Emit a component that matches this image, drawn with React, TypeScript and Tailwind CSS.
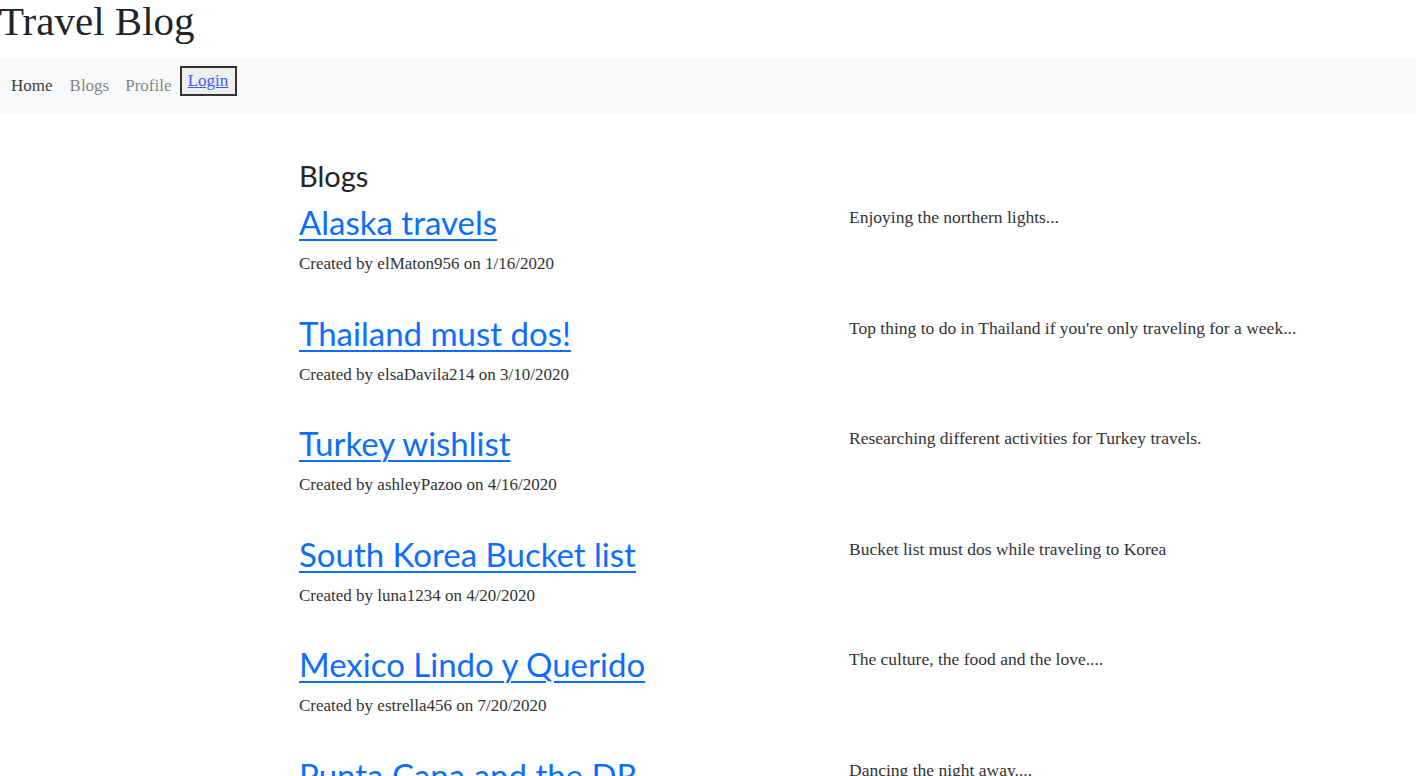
import React from "react";

const blogs = [
  { title: "Alaska travels", author: "elMaton956", date: "1/16/2020", desc: "Enjoying the northern lights..." },
  { title: "Thailand must dos!", author: "elsaDavila214", date: "3/10/2020", desc: "Top thing to do in Thailand if you're only traveling for a week..." },
  { title: "Turkey wishlist", author: "ashleyPazoo", date: "4/16/2020", desc: "Researching different activities for Turkey travels." },
  { title: "South Korea Bucket list", author: "luna1234", date: "4/20/2020", desc: "Bucket list must dos while traveling to Korea" },
  { title: "Mexico Lindo y Querido", author: "estrella456", date: "7/20/2020", desc: "The culture, the food and the love...." },
  { title: "Punta Cana and the DR", author: "mariaL22", date: "8/02/2020", desc: "Dancing the night away...." },
];

export default function App() {
  return (
    <div className="h-[776px] overflow-hidden bg-white text-[#212529] font-['Liberation_Serif',serif]">
      <h1 className="m-0 h-[60px] -mt-[2px] text-[41px] leading-[46px] font-normal -ml-[1px]">Travel Blog</h1>
      <nav className="h-[56px] bg-[#f8f9fa] flex items-start pl-[3px]">
        <a className="px-2 pt-[15px] text-[17px] text-[#212529]/90">Home</a>
        <a className="pl-[9px] pr-2 pt-[15px] text-[17px] text-black/50">Blogs</a>
        <a className="px-2 pt-[15px] text-[17px] text-black/50">Profile</a>
        <button className="mt-[8px] h-[30px] w-[57px] bg-[#efefef] border-2 border-[#333] text-[17px] leading-[20px] pb-[1px]">
          <a className="text-[#3b5bff] underline">Login</a>
        </button>
      </nav>
      <main className="pl-[299px] pt-[44px]">
        <h3 className="m-0 text-[29px] leading-[36px] font-['Lato',sans-serif] font-normal text-[#212529]">Blogs</h3>
        <div className="flex flex-col mt-[8px]">
          {blogs.map((b) => (
            <div key={b.title} className="flex h-[110.5px] shrink-0">
              <div className="w-[550px] shrink-0">
                <a className="block w-fit text-[33px] leading-[40px] font-['Lato',sans-serif] font-normal text-[#0d6efd] underline decoration-2 underline-offset-[4px]">
                  {b.title}
                </a>
                <p className="mt-[10px] text-[17px] leading-[24px] text-[#333]">
                  Created by {b.author} on {b.date}
                </p>
              </div>
              <p className="pt-[3px] text-[17.5px] leading-[24px] text-[#333]">{b.desc}</p>
            </div>
          ))}
        </div>
      </main>
    </div>
  );
}
